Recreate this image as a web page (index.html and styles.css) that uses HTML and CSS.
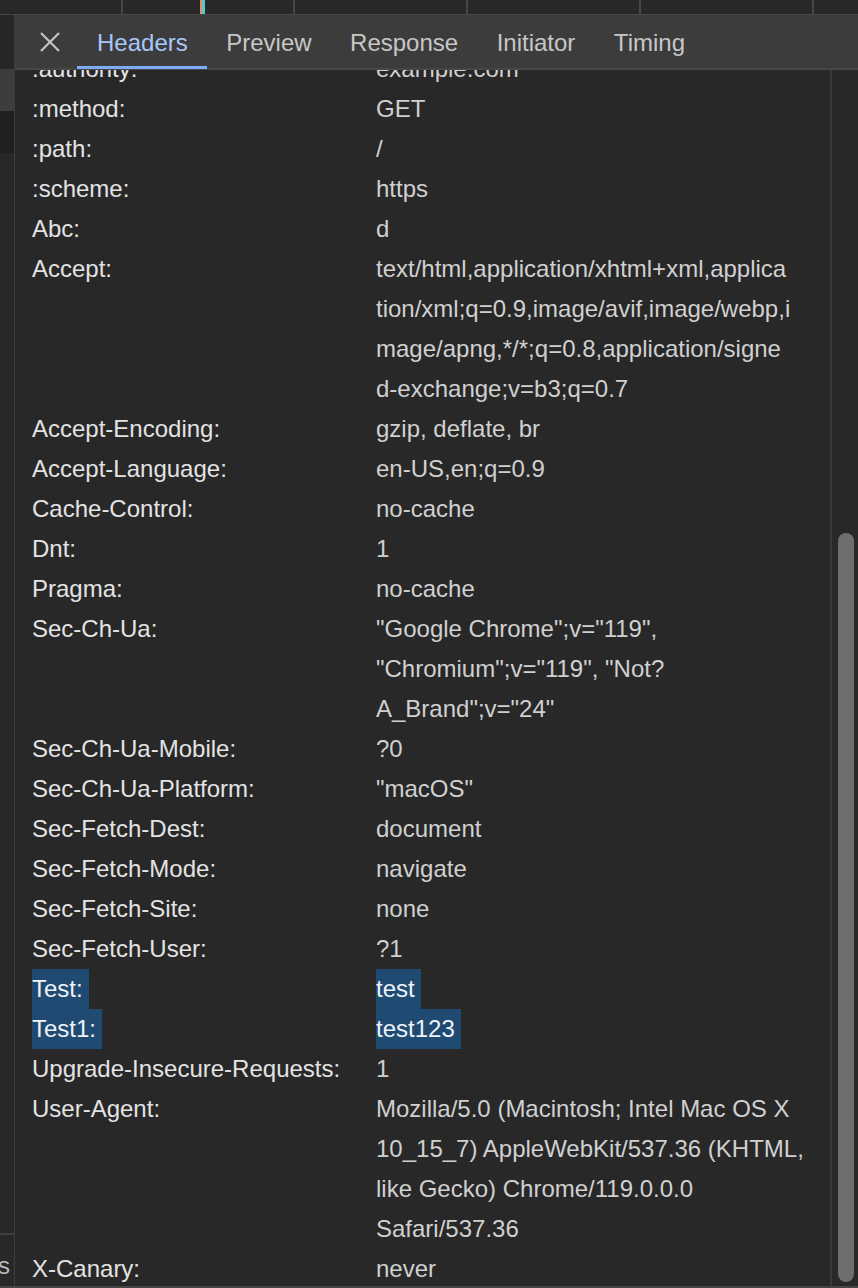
FILE: index.html
```html
<!DOCTYPE html>
<html lang="en">
<head>
<meta charset="utf-8">
<title>Headers</title>
<link rel="stylesheet" href="styles.css">
</head>
<body>
<div class="window">
  <div class="topstrip">
    <div class="cell w1"></div>
    <div class="cell w2"><span class="mark-o"></span><span class="mark-t"></span></div>
    <div class="cell w3"></div>
    <div class="cell w4"></div>
    <div class="cell w5"></div>
    <div class="cell w6"></div>
  </div>
  <div class="main">
    <aside class="side">
      <div class="s1"></div>
      <div class="s2"></div>
      <div class="s3"></div>
      <div class="sfill"></div>
      <div class="sbottom"><span>Sources</span></div>
    </aside>
    <section class="panel">
      <nav class="tabs">
        <button class="close" aria-label="Close">
          <svg width="20" height="20" viewBox="0 0 20 20"><path d="M1 1L19 19M19 1L1 19" stroke="#c4c4c4" stroke-width="2.2" fill="none"/></svg>
        </button>
        <div class="tab active">Headers</div>
        <div class="tab">Preview</div>
        <div class="tab">Response</div>
        <div class="tab">Initiator</div>
        <div class="tab">Timing</div>
      </nav>
      <div class="content">
        <div class="rows-wrap">
          <div class="rows">
            <div class="row"><div class="name">:authority:</div><div class="val">example.com</div></div>
            <div class="row"><div class="name">:method:</div><div class="val">GET</div></div>
            <div class="row"><div class="name">:path:</div><div class="val">/</div></div>
            <div class="row"><div class="name">:scheme:</div><div class="val">https</div></div>
            <div class="row"><div class="name">Abc:</div><div class="val">d</div></div>
            <div class="row"><div class="name">Accept:</div><div class="val">text/html,application/xhtml+xml,applica<br>tion/xml;q=0.9,image/avif,image/webp,i<br>mage/apng,*/*;q=0.8,application/signe<br>d-exchange;v=b3;q=0.7</div></div>
            <div class="row"><div class="name">Accept-Encoding:</div><div class="val">gzip, deflate, br</div></div>
            <div class="row"><div class="name">Accept-Language:</div><div class="val">en-US,en;q=0.9</div></div>
            <div class="row"><div class="name">Cache-Control:</div><div class="val">no-cache</div></div>
            <div class="row"><div class="name">Dnt:</div><div class="val">1</div></div>
            <div class="row"><div class="name">Pragma:</div><div class="val">no-cache</div></div>
            <div class="row"><div class="name">Sec-Ch-Ua:</div><div class="val">"Google Chrome";v="119",<br>"Chromium";v="119", "Not?<br>A_Brand";v="24"</div></div>
            <div class="row"><div class="name">Sec-Ch-Ua-Mobile:</div><div class="val">?0</div></div>
            <div class="row"><div class="name">Sec-Ch-Ua-Platform:</div><div class="val">"macOS"</div></div>
            <div class="row"><div class="name">Sec-Fetch-Dest:</div><div class="val">document</div></div>
            <div class="row"><div class="name">Sec-Fetch-Mode:</div><div class="val">navigate</div></div>
            <div class="row"><div class="name">Sec-Fetch-Site:</div><div class="val">none</div></div>
            <div class="row"><div class="name">Sec-Fetch-User:</div><div class="val">?1</div></div>
            <div class="row"><div class="name"><span class="hl">Test:</span></div><div class="val"><span class="hl">test</span></div></div>
            <div class="row"><div class="name"><span class="hl">Test1:</span></div><div class="val"><span class="hl">test123</span></div></div>
            <div class="row"><div class="name">Upgrade-Insecure-Requests:</div><div class="val">1</div></div>
            <div class="row"><div class="name">User-Agent:</div><div class="val">Mozilla/5.0 (Macintosh; Intel Mac OS X<br>10_15_7) AppleWebKit/537.36 (KHTML,<br>like Gecko) Chrome/119.0.0.0<br>Safari/537.36</div></div>
            <div class="row"><div class="name">X-Canary:</div><div class="val">never</div></div>
          </div>
        </div>
        <div class="scroll"><div class="thumb"></div></div>
      </div>
    </section>
  </div>
</div>
</body>
</html>
```

FILE: styles.css
```css
* { box-sizing: border-box; }

html, body {
  margin: 0;
  padding: 0;
  width: 858px;
  height: 1288px;
  overflow: hidden;
  background: #282828;
  font-family: "Liberation Sans", Arial, Helvetica, sans-serif;
}

.window {
  width: 858px;
  height: 1288px;
  display: flex;
  flex-direction: column;
  border-bottom: 2px solid #464646;
}

/* top strip */
.topstrip {
  height: 15px;
  flex: none;
  display: flex;
  background: #282828;
  border-bottom: 1px solid #464646;
}
.cell {
  height: 14px;
  border-right: 2px solid #464646;
  display: flex;
}
.w1 { width: 123px; }
.w2 { width: 172px; padding-left: 77px; }
.w3 { width: 173px; }
.w4 { width: 173px; }
.w5 { width: 173px; }
.w6 { flex: 1; border-right: none; }
.mark-o { width: 2px; height: 14px; background: #e0906a; }
.mark-t { width: 3px; height: 14px; background: #5ac8c8; }

.main {
  flex: 1;
  display: flex;
  min-height: 0;
}

/* left strip */
.side {
  width: 15px;
  flex: none;
  display: flex;
  flex-direction: column;
  border-right: 1px solid #3e3e3e;
  background: #282828;
}
.s1 { height: 54px; background: #252627; }
.s2 { height: 42px; background: #3c3d3d; }
.s3 { height: 42px; background: #1f2020; }
.sfill { flex: 1; border-bottom: 2px solid #3e3e3e; }
.sbottom {
  height: 51px;
  overflow: hidden;
  display: flex;
  justify-content: flex-end;
  align-items: center;
  padding-right: 4px;
  padding-top: 10px;
}
.sbottom span {
  font-size: 24px;
  color: #b9b9b9;
  white-space: nowrap;
}

/* panel */
.panel {
  flex: 1;
  display: flex;
  flex-direction: column;
  min-width: 0;
}

.tabs {
  height: 55px;
  flex: none;
  display: flex;
  align-items: stretch;
  background: #3c3c3c;
  border-bottom: 2px solid #464646;
  padding-left: 13px;
}
.close {
  width: 44px;
  margin-right: 5px;
  padding: 0;
  border: none;
  background: transparent;
  display: flex;
  align-items: center;
  justify-content: center;
}
.tab {
  position: relative;
  padding: 0 19px 0 19.5px;
  display: flex;
  align-items: center;
  padding-top: 3px;
  font-size: 24px;
  color: #c7c7c7;
}
.tab.active { color: #a8c7fa; padding-left: 20px; }
.tab.active::after {
  content: "";
  position: absolute;
  left: 0;
  right: 0;
  bottom: -1px;
  height: 3px;
  background: #7cacf8;
}

/* content */
.content {
  flex: 1;
  display: flex;
  min-height: 0;
}
.rows-wrap {
  flex: 1;
  overflow: hidden;
}
.rows {
  margin-top: -21px;
  padding-left: 17px;
}
.row {
  display: flex;
  font-size: 24px;
  line-height: 40px;
}
.name {
  width: 344px;
  flex: none;
  color: #e3e3e3;
  white-space: nowrap;
}
.val {
  flex: 1;
  color: #d0d0d0;
  white-space: nowrap;
}
.hl {
  display: inline-block;
  background: #1f4a72;
  color: #eef3fa;
  line-height: 40px;
  padding-right: 6px;
}

.scroll {
  width: 28px;
  flex: none;
  border-left: 2px solid #3a3a3a;
  padding-top: 463px;
  padding-left: 6px;
}
.thumb {
  width: 16px;
  height: 749px;
  border-radius: 8px;
  background: #6e6e6e;
}
```
